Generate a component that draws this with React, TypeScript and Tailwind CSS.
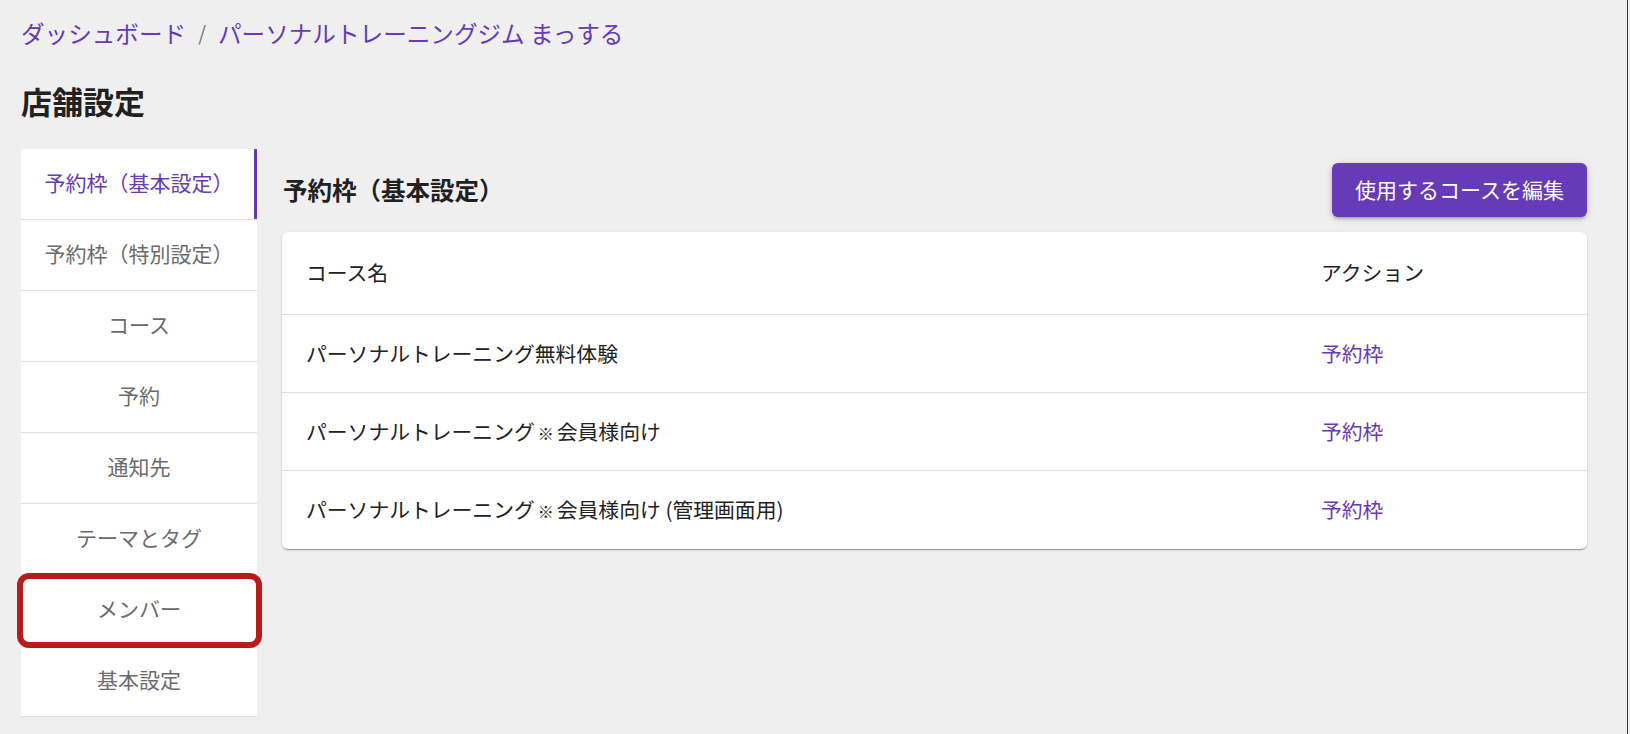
import { useState } from "react";

const TABS = [
  "予約枠（基本設定）",
  "予約枠（特別設定）",
  "コース",
  "予約",
  "通知先",
  "テーマとタグ",
  "メンバー",
  "基本設定",
];

// ※ is drawn small in the reference, so it gets its own span
const COURSES: [string, string?][] = [
  ["パーソナルトレーニング無料体験"],
  ["パーソナルトレーニング", "会員様向け"],
  ["パーソナルトレーニング", "会員様向け (管理画面用)"],
];

export default function App() {
  const [tab, setTab] = useState(0);

  return (
    <div
      className="w-full h-[734px] bg-[#efefef] overflow-hidden"
      style={{ fontFamily: '"Noto Sans CJK JP", "Noto Sans", sans-serif' }}
    >
      <div className="w-[1628px] h-full border-r border-[#3c3c3c] pl-[21px] pr-[40px]">
        {/* breadcrumb */}
        <div className="pt-[17px] h-[49px] flex items-center gap-[12px] text-[23.6px] leading-[32px] text-[#673ab7]">
          <span>ダッシュボード</span>
          <span className="text-[#757575] text-[20px]">/</span>
          <span>パーソナルトレーニングジム まっする</span>
        </div>

        <h1 className="mt-[32px] text-[31px] leading-[40px] font-bold text-[#212121]">店舗設定</h1>

        <div className="mt-[28px] flex">
          {/* side tabs */}
          <div className="relative w-[236px] shrink-0">
            {TABS.map((t, i) => (
              <button
                key={t}
                onClick={() => setTab(i)}
                className={`relative w-full h-[71px] pb-[3px] flex items-center justify-center bg-white border-b border-[#e0e0e0] text-[21px] ${
                  tab === i ? "text-[#673ab7]" : "text-[#6b6b6b]"
                }`}
              >
                {t}
                {tab === i && <span className="absolute right-0 top-0 bottom-0 w-[3px] bg-[#673ab7]" />}
              </button>
            ))}
            {/* red highlight */}
            <div className="absolute left-[-4px] right-[-5px] top-[424px] h-[75px] rounded-[12px] border-[6px] border-[#b71c1c] pointer-events-none" />
          </div>

          {/* main */}
          <div className="flex-1 ml-[25px]">
            <div className="mt-[14px] h-[54px] flex items-center justify-between">
              <h2 className="pl-[1px] text-[24.5px] leading-[34px] font-bold text-[#212121]">予約枠（基本設定）</h2>
              <button className="h-[54px] px-[23px] rounded-[6px] bg-[#673ab7] text-white text-[21px] shadow-[0_3px_3px_-2px_rgba(0,0,0,0.2),0_2px_4px_0_rgba(0,0,0,0.14),0_1px_8px_0_rgba(0,0,0,0.12)]">
                使用するコースを編集
              </button>
            </div>

            <div className="mt-[15px] bg-white rounded-[6px] shadow-[0_2px_1px_-1px_rgba(0,0,0,0.2),0_1px_1px_0_rgba(0,0,0,0.14),0_1px_3px_0_rgba(0,0,0,0.12)]">
              <div className="grid grid-cols-[1015px_1fr] h-[83px] items-center border-b border-[#e0e0e0] text-[20.8px] text-[#212121]">
                <div className="pl-[24px]">コース名</div>
                <div className="pl-[24px]">アクション</div>
              </div>
              {COURSES.map(([a, b], i) => (
                <div
                  key={a + (b ?? "")}
                  className={`grid grid-cols-[1015px_1fr] h-[78px] items-center text-[20.8px] ${
                    i < COURSES.length - 1 ? "border-b border-[#e0e0e0]" : ""
                  }`}
                >
                  <div className="pl-[24px] text-[#212121]">
                    {a}
                    {b && (
                      <>
                        <span className="mx-[3px] text-[16px]">※</span>
                        {b}
                      </>
                    )}
                  </div>
                  <div className="pl-[24px]">
                    <a className="text-[#673ab7] cursor-pointer">予約枠</a>
                  </div>
                </div>
              ))}
            </div>
          </div>
        </div>
      </div>
    </div>
  );
}
